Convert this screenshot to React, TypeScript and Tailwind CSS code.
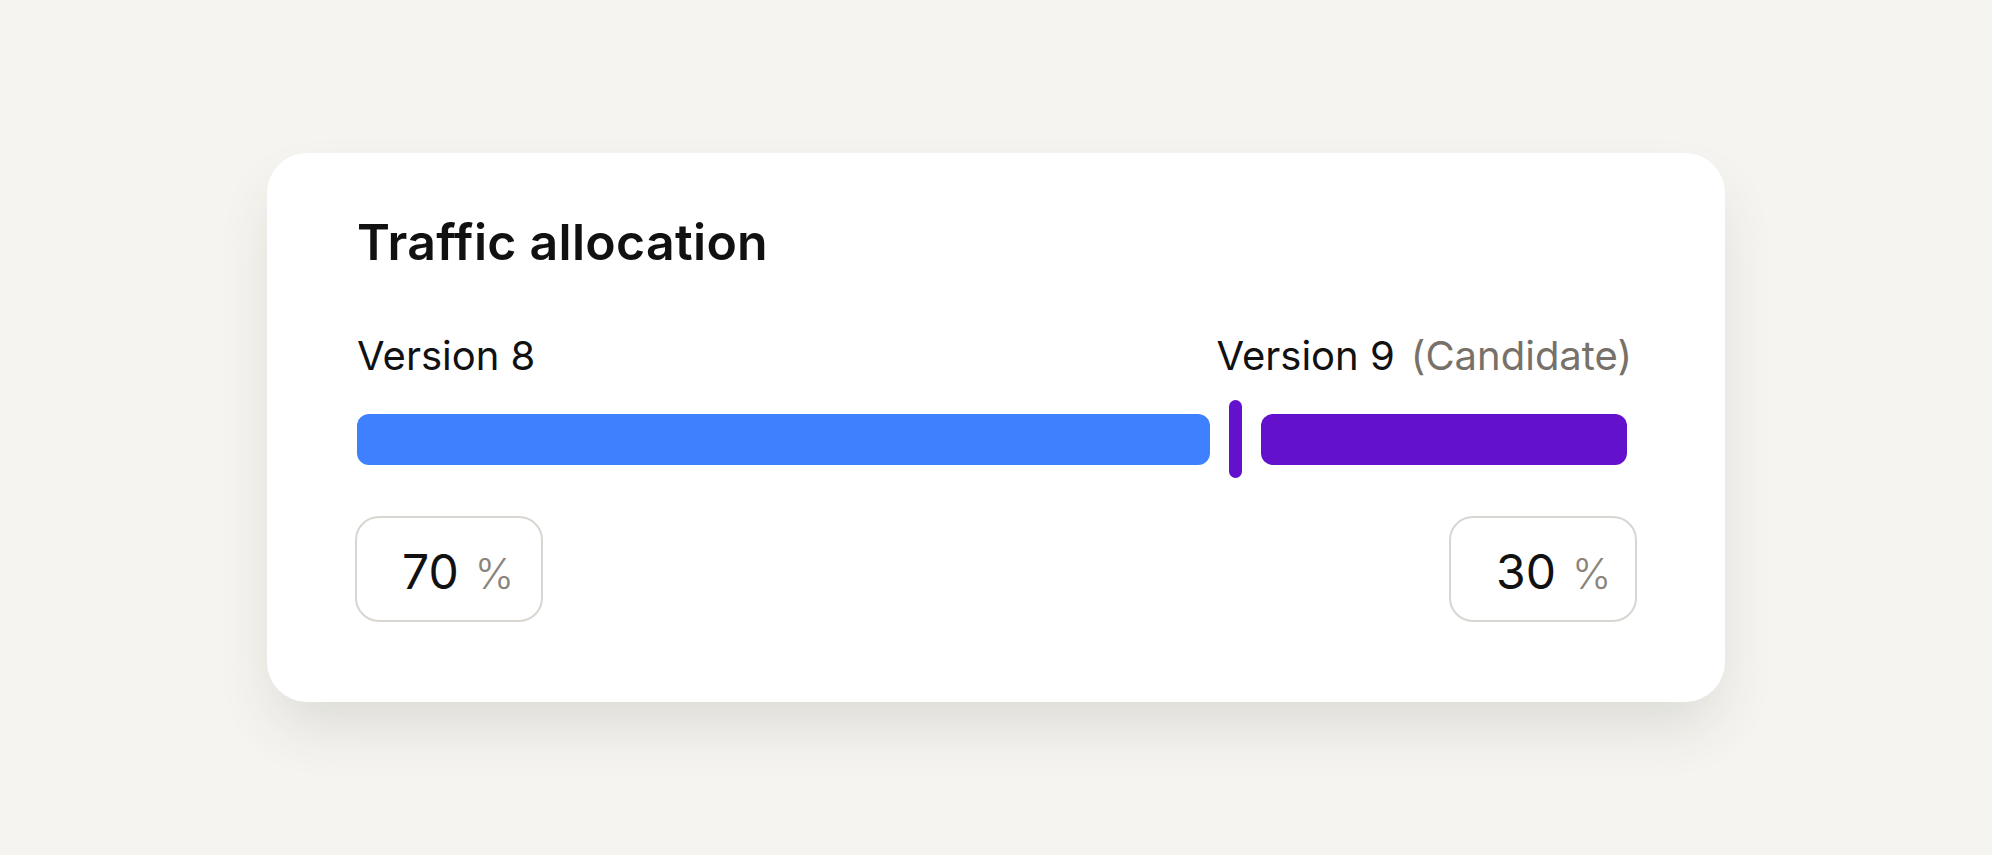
import React from 'react';

const font = { fontFamily: 'Inter, "Noto Sans", sans-serif' };

const PercentBox: React.FC<{ value: number }> = ({ value }) => (
  <div className="flex h-[106px] w-[188px] items-baseline rounded-[24px] border-2 border-[#d9d5d0] bg-white pl-[45px] pt-[30px]">
    <span className="text-[48px] leading-none text-[#111111]">{value}</span>
    <span className="ml-[16px] text-[42px] font-light leading-none text-[#8a847c]">%</span>
  </div>
);

const App: React.FC = () => {
  const left = 70;
  const right = 100 - left;

  return (
    <div
      className="flex h-screen w-full items-center justify-center bg-[#f5f4f0] [font-variant-ligatures:none]"
      style={font}
    >
      {/* Card */}
      <div className="w-[1458px] rounded-[40px] bg-white pb-[80px] pl-[90px] pr-[88px] pt-[59px] shadow-[0_30px_60px_-10px_rgba(60,55,40,0.14)]">
        <h2 className="text-[50px] font-semibold leading-[60px] tracking-[0.3px] text-[#111111]">
          Traffic allocation
        </h2>

        {/* Labels */}
        <div className="mt-[61px] flex items-center justify-between pr-[5px] text-[40px] leading-[46px]">
          <span className="text-[#111111]">Version 8</span>
          <div className="flex items-center gap-[16px]">
            <span className="text-[#111111]">Version 9</span>
            <span className="text-[#77716a]">(Candidate)</span>
          </div>
        </div>

        {/* Split bar */}
        <div className="mt-[21px] flex items-center gap-[19px] pr-[10px]">
          <div className="h-[51px] rounded-[12px] bg-[#3f80ff]" style={{ flex: left * 100 + 215 }} />
          <div className="h-[78px] w-[13px] rounded-full bg-[#6311cc]" />
          <div className="h-[51px] rounded-[12px] bg-[#6311cc]" style={{ flex: right * 100 + 93 }} />
        </div>

        {/* Inputs */}
        <div className="-ml-[2px] mt-[38px] flex items-center justify-between">
          <PercentBox value={left} />
          <PercentBox value={right} />
        </div>
      </div>
    </div>
  );
};

export default App;
